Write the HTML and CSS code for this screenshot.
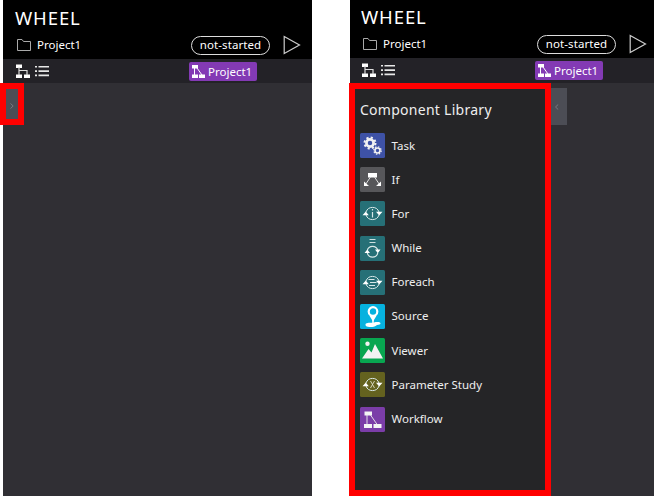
FILE: index.html
```
<!DOCTYPE html>
<html lang="en">
<head>
<meta charset="utf-8">
<title>WHEEL</title>
<link rel="stylesheet" href="styles.css">
</head>
<body>
<svg class="defs" width="0" height="0">
  <defs>
    <symbol id="folder" viewBox="0 0 16 12"><path d="M1.500 11.500V.5h4.500l1.500 2h7v9z" fill="none" stroke="#aaa" stroke-width="1"/></symbol>
    <symbol id="play" viewBox="0 0 18 20"><path d="M1.2 1.5 16.5 10 1.2 18.500z" fill="none" stroke="#ccc" stroke-width="1.2"/></symbol>
    <symbol id="tree" viewBox="0 0 15 15"><path d="M0 .5h6V4H0zM0 10.500h6V14H0zM8 10.500h6V14H8z" fill="#fff"/><path d="M3 3v8M3 6.500h8v4.500" fill="none" stroke="#ddd" stroke-width="1.200"/></symbol>
    <symbol id="list" viewBox="0 0 14 12"><path d="M0 1h2v1.600H0zM3.500 1H14v1.600H3.500zM0 5.300h2v1.600H0zM3.500 5.300H14v1.600H3.500zM0 9.600h2v1.600H0zM3.500 9.600H14v1.600H3.500z" fill="#e8e8e8"/></symbol>
    <symbol id="flow" viewBox="0 0 25 25"><path d="M4.500 4.500H12v4H4.500zM4 17h8v4H4zM13.500 17h8v4h-8z" fill="#f4f4f4"/><path d="M7 7v11M10.500 8l7 10" fill="none" stroke="#eee" stroke-width=".9"/></symbol>
    <symbol id="flow-small" viewBox="0 0 13 13"><path d="M0 0h6v3.500H0zM0 9.500h6V13H0zM7 9.500h6V13H7z" fill="#fff"/><path d="M2.500 3v7M5 3l5 7" fill="none" stroke="#fff" stroke-width="1"/></symbol>
    <symbol id="task" viewBox="0 0 25 25">
      <g fill="none" stroke="#f2f2f2">
        <circle cx="10" cy="10" r="3.600" stroke-width="2.700"/><circle cx="10" cy="10" r="5.500" stroke-width="2" stroke-dasharray="2.160 2.160"/>
        <circle cx="17.500" cy="17.500" r="2.500" stroke-width="1.600"/><circle cx="17.500" cy="17.500" r="3.700" stroke-width="1.300" stroke-dasharray="1.450 1.450"/>
      </g>
    </symbol>
    <symbol id="if" viewBox="0 0 25 25"><path d="M8 6h9v4.500H8z" fill="#fff"/><path d="M10.500 10 5.500 17.500M14.500 10l5 7.500" fill="none" stroke="#ddd"/><path d="M4 14.500V19h5zM21 14.500V19h-5z" fill="#fff"/></symbol>
    <symbol id="cycle" viewBox="0 0 25 25">
      <path d="M6 11a6.900 6.900 0 0 1 13 0M19 14a6.900 6.900 0 0 1-13 0" fill="none" stroke="#d8e8e8" stroke-width="1"/>
      <path d="M2.500 14.200 5.800 10.500l3 3.700zM16 10.800l3.200 3.700 3.300-3.700z" fill="#fff"/>
    </symbol>
    <symbol id="while" viewBox="0 0 25 25">
      <path d="M9.500 3.500h6M9.500 6.500h6" stroke="#cde0e0"/>
      <path d="M7.300 14.500a5.400 5.400 0 0 1 10.500 0M17.800 17a5.400 5.400 0 0 1-10.500 0" fill="none" stroke="#d8e8e8" stroke-width="1.100"/>
      <path d="M4.500 17 7.300 13.400l2.700 3.600zM15 13.600l2.800 3.600 2.700-3.600z" fill="#fff"/>
    </symbol>
    <symbol id="lines" viewBox="0 0 25 25"><path d="M8.500 9.500h6M10 12.500h6.500M9 15.500h6" stroke="#d8e8e8"/></symbol>
    <symbol id="info" viewBox="0 0 25 25"><path d="M12.500 11v5.500M12.500 8v1.500" stroke="#d8e8e8" stroke-width="1.200"/></symbol>
    <symbol id="cross" viewBox="0 0 25 25"><path d="M10.500 9l4 7M14.500 9l-4 7" stroke="#dedec8" stroke-width=".9"/></symbol>
    <symbol id="source" viewBox="0 0 25 25">
      <circle cx="13" cy="7.500" r="4.300" fill="none" stroke="#fff" stroke-width="2.200"/><path d="M9.300 11.500 13 17.500l3.700-6z" fill="#fff"/><path d="M13 15v4" stroke="#fff" stroke-width="1.500"/>
      <path d="M6 19.500c2-1.500 5-.5 8-1 3-.8 6.500-.5 6.500 1s-3 1-4.500 2.200c-2 1.800-8.500 1.600-10 .3-.8-.8-.6-1.900 0-2.500z" fill="#fff"/>
    </symbol>
    <symbol id="viewer" viewBox="0 0 25 25"><circle cx="7.500" cy="5.800" r="2.200" fill="#f2f2f2"/><path d="M2 20.500 8.500 11l3 3.500L15 6l8 14.500z" fill="#f2f2f2"/></symbol>
  </defs>
</svg>
<main class="stage">
  <section class="app app-closed">
    <header class="header">
      <h1 class="title">WHEEL</h1>
      <div class="project">
        <svg class="folder"><use href="#folder"/></svg>
        <span class="project-name">Project1</span>
        <span class="status">not-started</span>
        <svg class="play"><use href="#play"/></svg>
      </div>
    </header>
    <nav class="toolbar">
      <svg class="tree"><use href="#tree"/></svg>
      <svg class="list"><use href="#list"/></svg>
      <span class="chip"><svg class="chip-icon"><use href="#flow-small"/></svg>Project1</span>
    </nav>
    <div class="canvas">
      <div class="frame frame-handle"><div class="handle"><svg class="chevron" viewBox="0 0 4 6"><path d="M.5.500 3.200 3 .5 5.500"/></svg></div></div>
    </div>
  </section>

  <section class="app app-open">
    <header class="header">
      <h1 class="title">WHEEL</h1>
      <div class="project">
        <svg class="folder"><use href="#folder"/></svg>
        <span class="project-name">Project1</span>
        <span class="status">not-started</span>
        <svg class="play"><use href="#play"/></svg>
      </div>
    </header>
    <nav class="toolbar">
      <svg class="tree"><use href="#tree"/></svg>
      <svg class="list"><use href="#list"/></svg>
      <span class="chip"><svg class="chip-icon"><use href="#flow-small"/></svg>Project1</span>
    </nav>
    <div class="canvas">
      <aside class="frame library">
        <h2 class="library-title">Component Library</h2>
        <ul class="items">
          <li class="item"><svg class="tile blue"><use href="#task"/></svg>Task</li>
          <li class="item"><svg class="tile gray"><use href="#if"/></svg>If</li>
          <li class="item"><svg class="tile teal"><use href="#cycle"/><use href="#info"/></svg>For</li>
          <li class="item"><svg class="tile teal"><use href="#while"/></svg>While</li>
          <li class="item"><svg class="tile teal"><use href="#cycle"/><use href="#lines"/></svg>Foreach</li>
          <li class="item"><svg class="tile cyan"><use href="#source"/></svg>Source</li>
          <li class="item"><svg class="tile green"><use href="#viewer"/></svg>Viewer</li>
          <li class="item"><svg class="tile olive"><use href="#cycle"/><use href="#cross"/></svg>Parameter Study</li>
          <li class="item"><svg class="tile purple"><use href="#flow"/></svg>Workflow</li>
        </ul>
      </aside>
      <div class="handle handle-open"><svg class="chevron" viewBox="0 0 4 6"><path d="M3.200.500.5 3l2.700 2.500"/></svg></div>
    </div>
  </section>
</main>
</body>
</html>
```
FILE: styles.css
```
* { box-sizing: border-box; }
body { margin: 0; background: #fff; color: #fff; font: 11.5px/16px "Noto Sans", sans-serif; overflow: hidden; }
h1, h2, ul { margin: 0; padding: 0; font-weight: 400; list-style: none; }
svg { display: block; flex: none; }
.defs { position: absolute; }
.stage { display: flex; width: 654px; height: 496px; padding-left: 3px; gap: 38px; }
.app { display: flex; flex-direction: column; flex: none; height: 496px; }
.app-closed { width: 309px; --inset: 12px; }
.app-open { width: 304px; --inset: 11px; }
.header { height: 59px; background: #000; padding: 5px 0 0 var(--inset); }
.app-open .header { height: 58px; padding-top: 4px; }
.title { font-size: 18.5px; line-height: 25px; letter-spacing: .9px; }
.project { display: flex; align-items: center; height: 20px; margin-top: 5px; padding-left: 1px; }
.folder { width: 16px; height: 12px; }
.project-name { width: 154px; margin-left: 5px; }
.status { width: 79px; height: 19px; border: 1px solid #ddd; border-radius: 10px; line-height: 15px; text-align: center; letter-spacing: .1px; }
.play { width: 18px; height: 20px; margin-left: 13px; }
.toolbar { display: flex; align-items: center; height: 24px; background: #232227; padding-left: calc(var(--inset) + 1px); }
.app-open .toolbar { height: 25px; padding-bottom: 1px; }
.tree { width: 15px; height: 15px; }
.list { width: 14px; height: 12px; margin-left: 4px; }
.chip { display: flex; align-items: center; width: 68px; height: 19px; margin-left: 140px; padding-left: 3px; gap: 3px; background: #833ab4; border-radius: 2px; line-height: 17px; }
.chip-icon { width: 13px; height: 13px; }
.canvas { display: flex; align-items: flex-start; flex: 1; background: #302f34; }
.frame { flex: none; border: 6px solid #f00; }
.frame-handle { width: 24px; height: 42px; margin-left: -3px; }
.handle { display: flex; align-items: center; justify-content: center; width: 12px; height: 30px; background: #4c4d55; padding-top: 4px; }
.frame-handle { background: #302f34; }
.handle-open { width: 16px; height: 37px; margin-top: 5px; padding: 0 4px 0 0; }
.chevron { width: 4px; height: 6px; fill: none; stroke: #85858b; stroke-width: .8; }
.library { width: 202px; height: 413px; margin-left: -1px; background: #252527; color: #eee; padding: 11px 0 0 5px; }
.library-title { font-size: 14px; line-height: 20px; letter-spacing: .27px; }
.items { margin-top: 13px; }
.item { display: flex; align-items: center; gap: 6.500px; height: 25px; margin-bottom: 9.200px; }
.tile { width: 25px; height: 25px; border-radius: 1.500px; }
.blue { background: #3e52a6; }
.gray { background: #57575a; }
.teal { background: #267077; }
.cyan { background: #06b2df; }
.green { background: #08a650; }
.olive { background: #64621f; }
.purple { background: #7b3da8; }
```
